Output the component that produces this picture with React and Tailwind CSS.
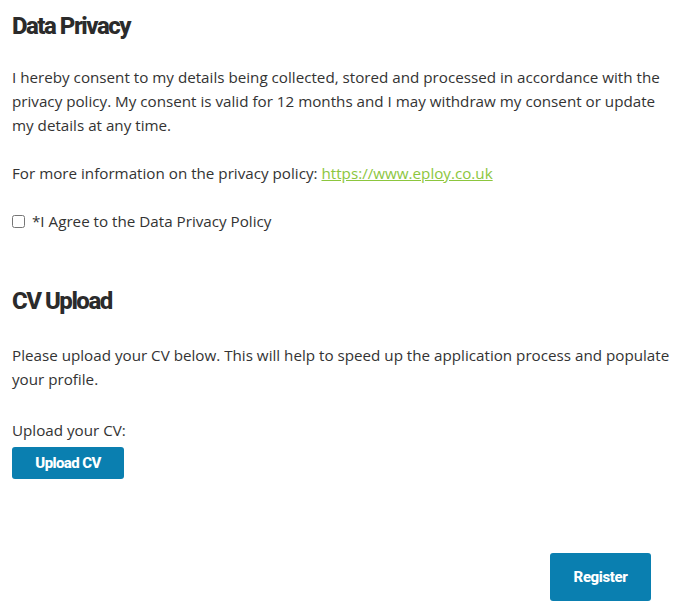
import React, { useState } from 'react';

const headingFont = { fontFamily: 'Roboto, "Liberation Sans", sans-serif' };

const App = () => {
  const [agreed, setAgreed] = useState(false);

  return (
    <div
      className="min-h-screen bg-white px-3 text-[15.2px] leading-6 text-[#333333]"
      style={{ fontFamily: '"Open Sans", "Noto Sans", sans-serif' }}
    >
      {/* Data Privacy */}
      <h2 className="pt-[11px] text-[24px] font-extrabold leading-[30px] tracking-[-1.5px] text-[#2b2b2b]" style={headingFont}>
        Data Privacy
      </h2>
      <p className="mt-[24px]">
        I hereby consent to my details being collected, stored and processed in accordance with the
        privacy policy. My consent is valid for 12 months and I may withdraw my consent or update
        my details at any time.
      </p>
      <p className="mt-6">
        For more information on the privacy policy:{' '}
        <a href="#" className="text-[#8cc63e] underline">https://www.eploy.co.uk</a>
      </p>
      <label className="mt-6 flex items-center gap-[7px]">
        <input
          type="checkbox"
          checked={agreed}
          onChange={e => setAgreed(e.target.checked)}
          className="h-[13px] w-[13px]"
        />
        <span>*I Agree to the Data Privacy Policy</span>
      </label>

      {/* CV Upload */}
      <h2 className="mt-[53px] text-[24px] font-extrabold leading-[30px] tracking-[-1.5px] text-[#2b2b2b]" style={headingFont}>
        CV Upload
      </h2>
      <p className="mt-[27px]">
        Please upload your CV below. This will help to speed up the application process and populate
        your profile.
      </p>
      <p className="mt-[27px]">Upload your CV:</p>
      <button
        className="mt-[5px] flex h-[32px] w-[112px] items-center justify-center rounded-[3px] bg-[#0a7fb0] text-[15px] font-extrabold tracking-[-0.6px] text-white"
        style={headingFont}
      >
        Upload CV
      </button>

      <div className="mt-[74px] flex justify-end pr-[27px]">
        <button
          className="flex h-[48px] w-[101px] items-center justify-center rounded-[3px] bg-[#0a7fb0] text-[15px] font-extrabold tracking-[-0.4px] text-white"
          style={headingFont}
        >
          Register
        </button>
      </div>
    </div>
  );
};

export default App;
